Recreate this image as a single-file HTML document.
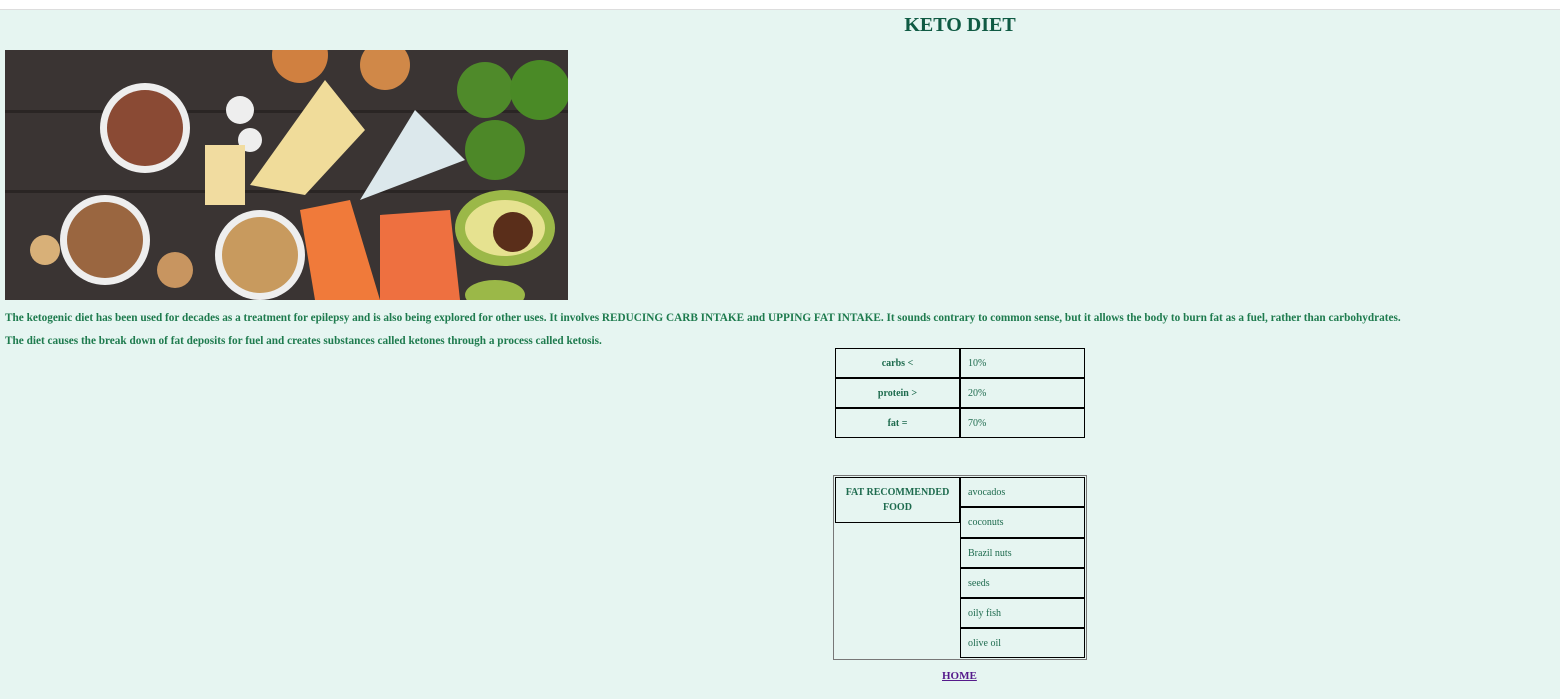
<!DOCTYPE html>
<html><head><style>
body{margin:0;width:1560px;height:698px;background:#fff;font-family:"Liberation Serif",serif;position:relative;overflow:hidden}
.bg{position:absolute;left:0;top:9px;width:1560px;height:689px;background:#e6f5f1;border-top:1px solid #ddd}
.a{position:absolute}
h1{position:absolute;left:0;width:1920px;top:14px;margin:0;text-align:center;font-size:20px;color:#0f5a43;font-weight:bold}
p{position:absolute;left:5px;margin:0;font-size:11.25px;font-weight:bold;color:#1e7b4e;white-space:nowrap}
.c{position:absolute;border:1px solid #000;box-sizing:border-box;font-size:10px;color:#1e6b4e;display:flex;align-items:center}
.l{justify-content:center;font-weight:bold;text-align:center}
.r{padding-left:7px}
</style></head><body>
<div class="bg"></div>
<h1>KETO DIET</h1>
<svg class="a" style="left:5px;top:50px" width="563" height="250">
<rect width="563" height="250" fill="#3a3433"/>
<rect y="60" width="563" height="3" fill="#2a2524"/><rect y="140" width="563" height="3" fill="#2a2524"/>
<circle cx="140" cy="78" r="45" fill="#eee"/><circle cx="140" cy="78" r="38" fill="#8a4a34"/>
<circle cx="100" cy="190" r="45" fill="#eee"/><circle cx="100" cy="190" r="38" fill="#9a6640"/>
<circle cx="255" cy="205" r="45" fill="#eee"/><circle cx="255" cy="205" r="38" fill="#c89a5e"/>
<circle cx="295" cy="5" r="28" fill="#d08040"/><circle cx="380" cy="15" r="25" fill="#d08848"/>
<circle cx="235" cy="60" r="14" fill="#eee"/><circle cx="245" cy="90" r="12" fill="#eee"/>
<polygon points="245,135 320,30 360,80 300,145" fill="#f0dc9a"/>
<polygon points="355,150 410,60 460,110" fill="#dce8ec"/>
<rect x="200" y="95" width="40" height="60" fill="#f1dca0"/>
<circle cx="480" cy="40" r="28" fill="#4f8a2a"/><circle cx="535" cy="40" r="30" fill="#4a8a26"/><circle cx="490" cy="100" r="30" fill="#4d8828"/>
<polygon points="295,160 345,150 375,250 310,250" fill="#f07a3a"/>
<polygon points="375,165 445,160 455,250 375,250" fill="#ee7040"/>
<ellipse cx="500" cy="178" rx="50" ry="38" fill="#9bb848"/><ellipse cx="500" cy="178" rx="40" ry="28" fill="#e6e290"/><circle cx="508" cy="182" r="20" fill="#5a2e1a"/>
<ellipse cx="490" cy="245" rx="30" ry="15" fill="#9bb848"/>
<circle cx="170" cy="220" r="18" fill="#c89560"/><circle cx="40" cy="200" r="15" fill="#d8b078"/>
</svg>
<p style="top:312px">The ketogenic diet has been used for decades as a treatment for epilepsy and is also being explored for other uses. It involves REDUCING CARB INTAKE and UPPING FAT INTAKE. It sounds contrary to common sense, but it allows the body to burn fat as a fuel, rather than carbohydrates.</p>
<p style="top:335px">The diet causes the break down of fat deposits for fuel and creates substances called ketones through a process called ketosis.</p>
<div class="c l" style="left:835px;top:348px;width:125px;height:30px">carbs &lt;</div>
<div class="c r" style="left:960px;top:348px;width:125px;height:30px">10%</div>
<div class="c l" style="left:835px;top:378px;width:125px;height:30px">protein &gt;</div>
<div class="c r" style="left:960px;top:378px;width:125px;height:30px">20%</div>
<div class="c l" style="left:835px;top:408px;width:125px;height:30px">fat =</div>
<div class="c r" style="left:960px;top:408px;width:125px;height:30px">70%</div>
<div class="a" style="left:833px;top:475px;width:254px;height:185px;border:1px solid #777;box-sizing:border-box"></div>
<div class="c l" style="left:835px;top:477px;width:125px;height:46px;line-height:15px">FAT RECOMMENDED<br>FOOD</div>
<div class="c r" style="left:960px;top:477px;width:125px;height:30px">avocados</div>
<div class="c r" style="left:960px;top:507px;width:125px;height:31px">coconuts</div>
<div class="c r" style="left:960px;top:538px;width:125px;height:30px">Brazil nuts</div>
<div class="c r" style="left:960px;top:568px;width:125px;height:30px">seeds</div>
<div class="c r" style="left:960px;top:598px;width:125px;height:30px">oily fish</div>
<div class="c r" style="left:960px;top:628px;width:125px;height:30px">olive oil</div>
<a class="a" style="left:942px;top:670px;font-size:11px;font-weight:bold;color:#551a8b;text-decoration:underline">HOME</a>
</body></html>
